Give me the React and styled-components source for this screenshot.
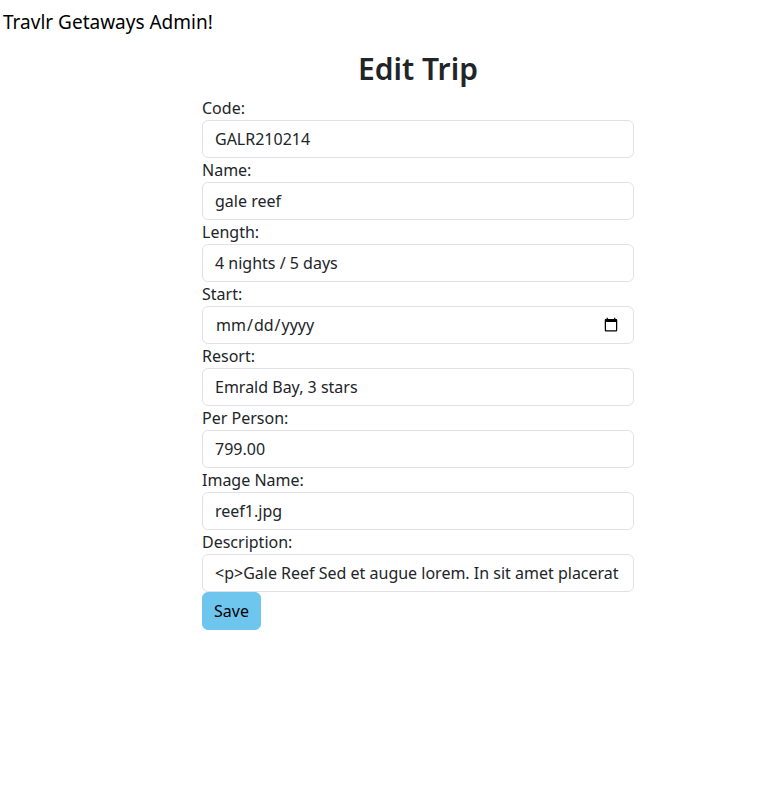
import styled, { createGlobalStyle } from "styled-components";

const GlobalStyle = createGlobalStyle`
  body {
    margin: 0;
    font-family: "Noto Sans", "Open Sans", sans-serif;
    font-size: 16px;
    line-height: 1.5;
    color: #212529;
    background: #ffffff;
  }
  * { box-sizing: border-box; }
`;

const Brand = styled.div`
  padding: 10px 3px 0;
  font-size: 19px;
  line-height: 24px;
  color: #000;
`;

const Title = styled.h2`
  margin: 16px 0 8px;
  text-align: center;
  font-size: 30px;
  font-weight: 600;
  line-height: 38px;
  padding-left: 62px;
`;

const Form = styled.form`
  width: 432px;
  margin: 0 0 0 202px;
  display: flex;
  flex-direction: column;
  align-items: flex-start;
`;

const Field = styled.div`
  width: 100%;
`;

const Label = styled.label`
  display: block;
  line-height: 24px;
`;

const Input = styled.input`
  display: block;
  width: 100%;
  height: 38px;
  padding: 6px 12px;
  font: inherit;
  color: #212529;
  background: #fff;
  border: 1px solid #dee2e6;
  border-radius: 6px;
  outline: none;
`;

const SaveButton = styled.button`
  height: 38px;
  padding: 6px 11px;
  font: inherit;
  color: #000;
  background: #6ec6ef;
  border: 1px solid #6ec6ef;
  border-radius: 6px;
`;

const fields = [
  { label: "Code:", value: "GALR210214" },
  { label: "Name:", value: "gale reef" },
  { label: "Length:", value: "4 nights / 5 days" },
  { label: "Start:", type: "date", value: "" },
  { label: "Resort:", value: "Emrald Bay, 3 stars" },
  { label: "Per Person:", value: "799.00" },
  { label: "Image Name:", value: "reef1.jpg" },
  {
    label: "Description:",
    value:
      "<p>Gale Reef Sed et augue lorem. In sit amet placerat arcu. Mauris volutpat ipsum ac justo mollis vel vestibulum orci gravida.</p>",
  },
];

export default function App() {
  return (
    <>
      <GlobalStyle />
      <Brand>Travlr Getaways Admin!</Brand>
      <Title>Edit Trip</Title>
      <Form onSubmit={(e) => e.preventDefault()}>
        {fields.map((f) => (
          <Field key={f.label}>
            <Label>{f.label}</Label>
            <Input type={f.type || "text"} defaultValue={f.value} />
          </Field>
        ))}
        <SaveButton type="submit">Save</SaveButton>
      </Form>
    </>
  );
}
